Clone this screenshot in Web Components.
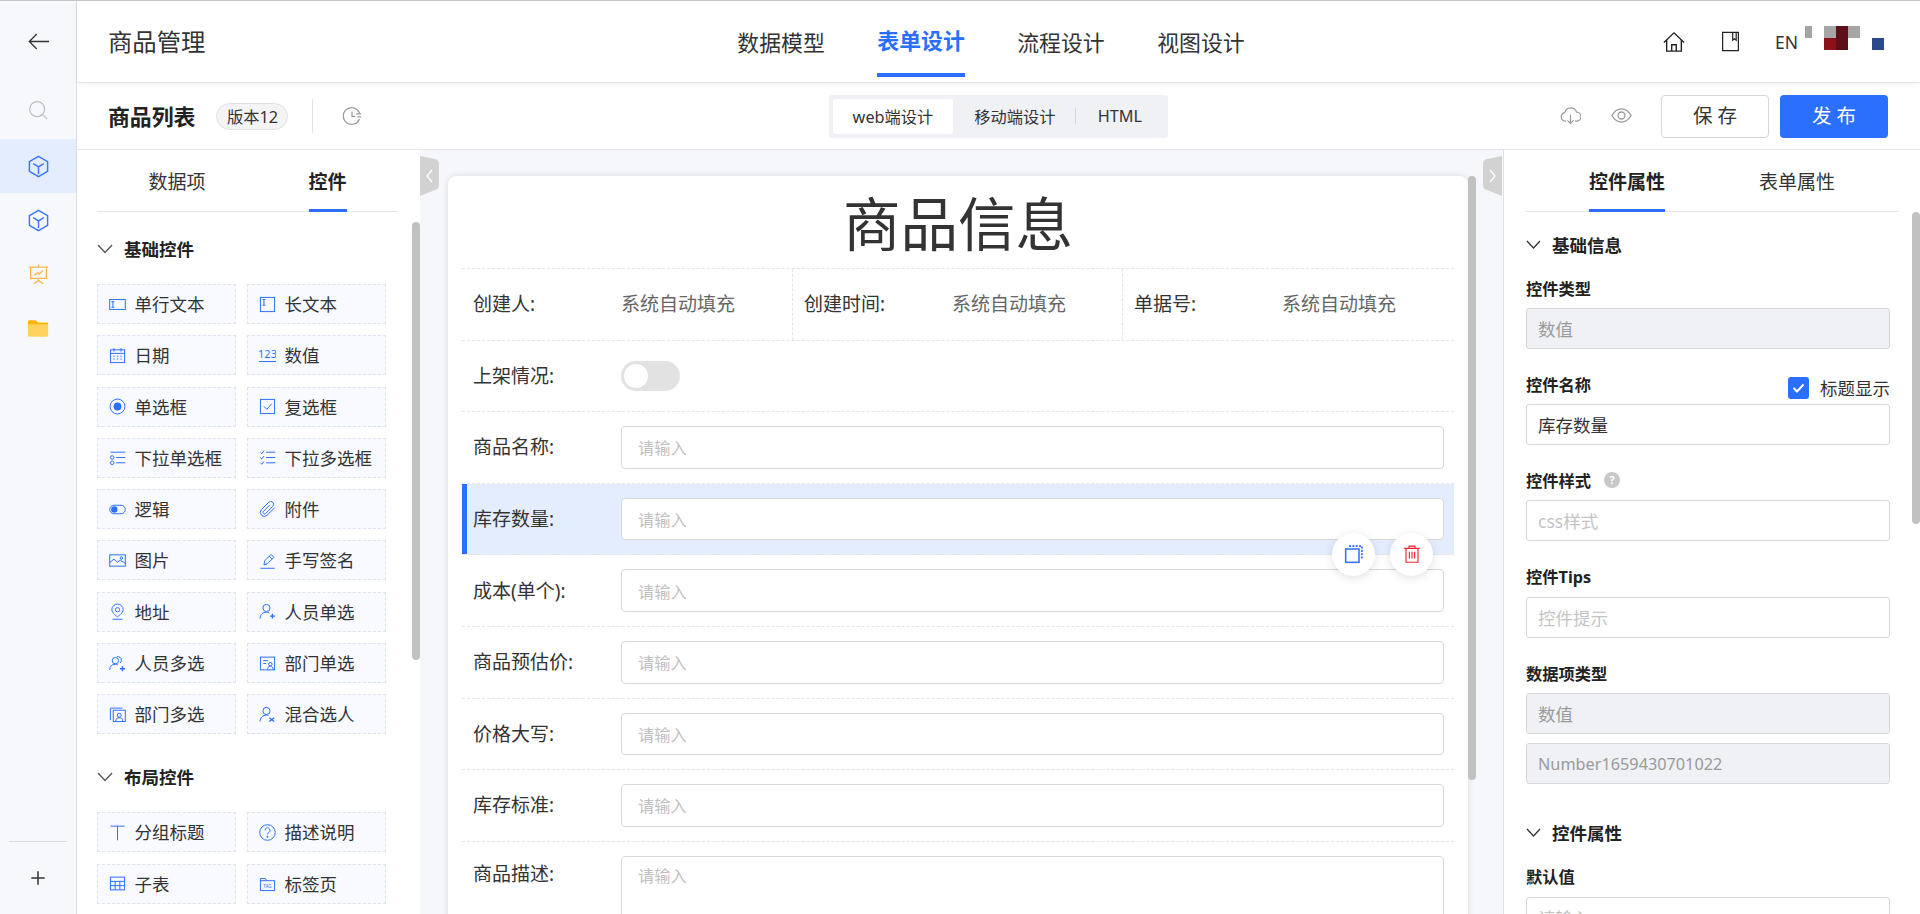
<!DOCTYPE html>
<html lang="zh-CN">

<head>
	<meta charset="UTF-8">
	<title>商品管理</title>
	<style>
		html, body { margin: 0; height: 914px; overflow: hidden; background: #fff; }
		body { font-family: "Noto Sans", "Noto Sans CJK SC", sans-serif; color: #333; }
	</style>
</head>

<body>
	<app-shell>
		<side-rail slot="rail"></side-rail>
		<top-bar slot="top" title="商品管理"></top-bar>
		<tool-bar slot="tool" title="商品列表" version="版本12"></tool-bar>

		<widget-panel slot="left">
			<widget-group title="基础控件">
				<widget-item icon="text" label="单行文本"></widget-item>
				<widget-item icon="longtext" label="长文本"></widget-item>
				<widget-item icon="date" label="日期"></widget-item>
				<widget-item icon="number" label="数值"></widget-item>
				<widget-item icon="radio" label="单选框"></widget-item>
				<widget-item icon="check" label="复选框"></widget-item>
				<widget-item icon="selone" label="下拉单选框"></widget-item>
				<widget-item icon="selmany" label="下拉多选框"></widget-item>
				<widget-item icon="toggle" label="逻辑"></widget-item>
				<widget-item icon="clip" label="附件"></widget-item>
				<widget-item icon="image" label="图片"></widget-item>
				<widget-item icon="pen" label="手写签名"></widget-item>
				<widget-item icon="pin" label="地址"></widget-item>
				<widget-item icon="userplus" label="人员单选"></widget-item>
				<widget-item icon="usersplus" label="人员多选"></widget-item>
				<widget-item icon="deptone" label="部门单选"></widget-item>
				<widget-item icon="deptmany" label="部门多选"></widget-item>
				<widget-item icon="usermix" label="混合选人"></widget-item>
			</widget-group>
			<widget-group title="布局控件">
				<widget-item icon="title" label="分组标题"></widget-item>
				<widget-item icon="help" label="描述说明"></widget-item>
				<widget-item icon="table" label="子表"></widget-item>
				<widget-item icon="tabs" label="标签页"></widget-item>
			</widget-group>
		</widget-panel>

		<form-stage slot="center">
			<form-card title="商品信息">
				<meta-row>
					<meta-cell label="创建人" value="系统自动填充"></meta-cell>
					<meta-cell label="创建时间" value="系统自动填充"></meta-cell>
					<meta-cell label="单据号" value="系统自动填充"></meta-cell>
				</meta-row>
				<form-row label="上架情况"><switch-box></switch-box></form-row>
				<form-row label="商品名称"><text-box></text-box></form-row>
				<form-row label="库存数量" selected><text-box></text-box></form-row>
				<form-row label="成本(单个)"><text-box></text-box></form-row>
				<form-row label="商品预估价"><text-box></text-box></form-row>
				<form-row label="价格大写"><text-box></text-box></form-row>
				<form-row label="库存标准"><text-box></text-box></form-row>
				<form-row label="商品描述" tall><text-box tall></text-box></form-row>
			</form-card>
		</form-stage>

		<prop-panel slot="right">
			<prop-section title="基础信息">
				<prop-field label="控件类型"><prop-input disabled value="数值"></prop-input></prop-field>
				<prop-field label="控件名称">
					<title-check slot="aside" label="标题显示"></title-check>
					<prop-input value="库存数量"></prop-input>
				</prop-field>
				<prop-field label="控件样式" hint><prop-input placeholder="css样式"></prop-input></prop-field>
				<prop-field label="控件Tips"><prop-input placeholder="控件提示"></prop-input></prop-field>
				<prop-field label="数据项类型">
					<prop-input disabled value="数值"></prop-input>
					<prop-input disabled latin value="Number1659430701022"></prop-input>
				</prop-field>
			</prop-section>
			<prop-section title="控件属性">
				<prop-field label="默认值"><prop-input placeholder="请输入"></prop-input></prop-field>
			</prop-section>
		</prop-panel>
	</app-shell>

	<script>
		const BLUE = '#2b6fff';

		// 아이콘 모음 : 전부 24 x 24 기준
		const ICONS = {
			back: '<path d="M24 12H1.500M10 3.500 1.500 12 10 20.500"/>',
			search: '<circle cx="11" cy="11" r="9"/><path d="M17.500 17.500 23 23"/>',
			cube: '<path d="M12 1.500 21.500 7v10L12 22.500 2.500 17V7z"/><path d="M12 12.500V20M12 12.500 6.500 9M12 12.500 17.500 9"/>',
			board: '<path d="M1 3.500h22M3 3.500v13h18v-13M12 .500v3M12 16.500v2.500M6.500 22.500l5.500-3.500 5.500 3.500M7 13l4-3 2 1.500 4-4"/>',
			folder: '<path fill="#ffb300" stroke="none" d="M1 5.500q0-2 2-2h6.500l2.500 2.500h10q1 0 1 1V10H1z"/><path fill="#ffd25f" stroke="none" d="M1 8h22v12q0 1.500-1.500 1.500h-19Q1 21.500 1 20z"/>',
			plus: '<path d="M12 4v16M4 12h16"/>',
			home: '<path d="M1 12.500 12 2l11 10.500M4 10v12h16V10M9.500 22v-7h5v7"/>',
			book: '<path d="M3 1.500h18v21H3zM14.500 1.500v9l2-1.500 2 1.500v-9"/>',
			history: '<path d="M21 8.500A10 10 0 1 0 21 15.500M12 7v5.500h4M17 9.500h6M18.500 13h4.500"/>',
			cloud: '<path d="M7 18.500H6A5 5 0 0 1 5.500 8.600 7 7 0 0 1 19 8.100 5.200 5.200 0 0 1 18.500 18.500H17M12 11v10M8.500 17.500 12 21l3.500-3.500"/>',
			eye: '<path d="M1 12c3-5 6.500-7.500 11-7.500S20 7 23 12c-3 5-6.500 7.500-11 7.500S4 17 1 12z"/><circle cx="12" cy="12" r="4"/>',
			text: '<rect x="1" y="5" width="22" height="14"/><path d="M5.500 8v8M3.500 8h4M3.500 16h4"/>',
			longtext: '<rect x="2" y="2" width="20" height="20"/><path d="M7 5v8M5 5h4M5 13h4"/>',
			date: '<rect x="2" y="4" width="20" height="18"/><path d="M2 9h20M7 1.500v5M17 1.500v5M6 13h2M11 13h2M16 13h2M6 17h2M11 17h2M16 17h2"/>',
			number: '<text x="12" y="16" font-size="15.500" text-anchor="middle" fill="currentColor" stroke="none" font-family="Noto Sans">123</text><path d="M0 20.500h24"/>',
			radio: '<circle cx="12" cy="12" r="10.500"/><circle cx="12" cy="12" r="5.500" fill="currentColor" stroke="none"/>',
			check: '<rect x="2" y="2" width="20" height="20"/><path d="M7 12l4 4 7-8"/>',
			selone: '<path d="M2 4.500h21M10 12h13M10 19.500h13"/><circle cx="4.500" cy="12" r="2.500"/><circle cx="4.500" cy="19.500" r="2.500"/>',
			selmany: '<path d="M2 4.500l2 2 3-4M10 4.500h13M10 12h13M10 19.500h13M2 12l2 2 3-4M2 19.500l2 2 3-4"/>',
			toggle: '<rect x="1" y="6" width="22" height="12" rx="6"/><circle cx="7.500" cy="12" r="4.500" fill="currentColor" stroke="none"/>',
			clip: '<path d="M22 9.500 11.500 20a5.500 5.500 0 0 1-8-8L13.500 2a4 4 0 0 1 6 5.500L9.500 17.500a2 2 0 0 1-3-3L15.500 5.500"/>',
			image: '<rect x="1" y="4" width="22" height="16"/><path d="M1 15l6-5 5 4.500 4-3 7 4.500"/><circle cx="17.500" cy="8.500" r="1.800"/>',
			pen: '<path d="M2 23h20M7 18l1-5.500L17 3.500 21 7.500l-9 9zM14.500 6l4 4"/>',
			pin: '<path d="M12 1.500a8 8 0 0 1 8 8c0 5-8 10-8 10s-8-5-8-10a8 8 0 0 1 8-8z"/><circle cx="12" cy="9.500" r="3"/><path d="M5 23h14"/>',
			userplus: '<circle cx="10.500" cy="7" r="5"/><path d="M1.500 22c0-6 4-9 9-9 2 0 3 .4 4 1"/><path d="M19 15v7M15.500 18.500h7" stroke-width="2"/>',
			usersplus: '<circle cx="9" cy="8" r="4.500"/><path d="M1 21c0-5 3-8 8-8 1.500 0 2.500.3 3.500 1M11 2.500a5 5 0 0 1 6.500 5c0 1.500-.7 3-2 4"/><path d="M19 16v7M15.500 19.500h7" stroke-width="2"/>',
			deptone: '<rect x="2" y="3" width="20" height="18"/><path d="M6 8h7M6 12h4M12 21c0-3.500 2-5 4-5s4 1.500 4 5"/><circle cx="16" cy="13" r="2.500"/>',
			deptmany: '<rect x="6" y="6" width="17" height="16"/><path d="M2 20V3h17M9.500 22c0-4 2-5.500 5-5.500s5 1.500 5 5.500"/><circle cx="14.500" cy="13" r="2.800"/>',
			usermix: '<circle cx="10.500" cy="7" r="5"/><path d="M1.500 22c0-6 4-9 9-9 1 0 2 .1 3 .5"/><path d="M14.500 16.500l7 5.500M14.500 22l7-5.500" stroke-width="1.800"/>',
			title: '<path d="M2 3h20M12 3v20"/>',
			help: '<circle cx="12" cy="12" r="11"/><path d="M8.500 9a3.500 3.500 0 1 1 5.300 3c-1.200.7-1.800 1.200-1.800 2.800"/><circle cx="12" cy="18" r=".8" fill="currentColor"/>',
			table: '<rect x="2" y="3" width="20" height="18"/><path d="M2 9h20M2 15h20M8.700 9v12M15.300 9v12"/>',
			tabs: '<path d="M2 5h7l2 3h11v14H2zM2 8h9"/><text x="12" y="18" font-size="6.500" text-anchor="middle" fill="currentColor" stroke="none" font-family="Noto Sans">TAG</text>',
			copy: '<rect x="2" y="6" width="16" height="16" stroke-width="1.800"/><path d="M6 2.500h15.500V18" stroke-dasharray="2.500 1.500" stroke-width="2"/>',
			trash: '<path d="M1.500 4.500h21M8 4.500V1.500h8v3M4 4.500V23h16V4.500M8.500 9v9M12 9v9M15.500 9v9"/>'
		};

		class UiIcon extends HTMLElement {
			connectedCallback() {
				const size = this.getAttribute('size') || 17;
				const sw = this.getAttribute('sw') || 1.4;
				const color = this.getAttribute('color') || BLUE;
				this.attachShadow({ mode: 'open' }).innerHTML = `
					<style>:host { display: inline-flex; flex: none; color: ${color}; } svg { display: block; }</style>
					<svg width="${size}" height="${size}" viewBox="0 0 24 24" fill="none" stroke="currentColor" stroke-width="${sw}">${ICONS[this.getAttribute('name')] || ''}</svg>`;
			}
		}

		class AppShell extends HTMLElement {
			connectedCallback() {
				this.attachShadow({ mode: 'open' }).innerHTML = `
					<style>
						:host { display: grid; grid-template-columns: 77px 1fr; height: 913px; border-top: 1px solid #c4c4c4; overflow: hidden; }
						.main { display: flex; flex-direction: column; min-width: 0; height: 913px; }
						.work { display: flex; flex: 1; min-height: 0; }
					</style>
					<slot name="rail"></slot>
					<div class="main">
						<slot name="top"></slot>
						<slot name="tool"></slot>
						<div class="work">
							<slot name="left"></slot>
							<slot name="center"></slot>
							<slot name="right"></slot>
						</div>
					</div>`;
			}
		}

		class SideRail extends HTMLElement {
			connectedCallback() {
				this.attachShadow({ mode: 'open' }).innerHTML = `
					<style>
						:host { display: flex; flex-direction: column; background: #f6f8fb; border-right: 1px solid #dcdee2; }
						.cell { display: flex; align-items: center; justify-content: center; height: 54px; }
						.back { height: 80px; }
						.find { height: 58px; }
						.on { background: #e3edfd; }
						.foot { margin: auto 9px 0; height: 72px; border-top: 1px solid #d8dade; }
					</style>
					<div class="cell back"><ui-icon name="back" size="21" color="#333" sw="1.500"></ui-icon></div>
					<div class="cell find"><ui-icon name="search" size="20" color="#bdbdbd" sw="1.500"></ui-icon></div>
					<div class="cell on"><ui-icon name="cube" size="23" color="#3a74ff" sw="1.500"></ui-icon></div>
					<div class="cell"><ui-icon name="cube" size="23" color="#3a74ff" sw="1.500"></ui-icon></div>
					<div class="cell"><ui-icon name="board" size="21" color="#ffb74a" sw="1.500"></ui-icon></div>
					<div class="cell"><ui-icon name="folder" size="22" sw="0"></ui-icon></div>
					<div class="cell foot"><ui-icon name="plus" size="20" color="#333" sw="1.800"></ui-icon></div>`;
			}
		}

		class TopBar extends HTMLElement {
			connectedCallback() {
				this.attachShadow({ mode: 'open' }).innerHTML = `
					<style>
						:host { display: grid; grid-template-columns: 1fr auto 1fr; align-items: center; height: 82px; padding: 0 35px 0 31px; border-bottom: 1px solid #e6e6e6; box-shadow: 0 1px 5px rgba(0, 0, 0, .06); position: relative; z-index: 2; background: #fff; box-sizing: border-box; }
						.name { font-size: 24.375px; color: #333; margin-top: -2px; }
						nav { display: flex; gap: 52.500px; margin-right: 11px; height: 81px; }
						nav a { font-size: 21.875px; display: flex; align-items: center; color: #333; height: 76px; box-sizing: border-box; padding-top: 4px; }
						nav a.on { color: ${BLUE}; font-weight: 700; border-bottom: 4px solid ${BLUE}; }
						.right { display: flex; align-items: center; justify-content: flex-end; }
						.en { font-size: 17.500px; margin: 0 7px 0 34px; color: #333; }
						ui-icon + ui-icon { margin-left: 35px; }
						svg.mosaic { display: block; margin-bottom: 7px; }
					</style>
					<div class="name">${this.getAttribute('title')}</div>
					<nav><a>数据模型</a><a class="on">表单设计</a><a>流程设计</a><a>视图设计</a></nav>
					<div class="right">
						<ui-icon name="home" size="22" color="#222" sw="1.500"></ui-icon>
						<ui-icon name="book" size="21" color="#222" sw="1.400"></ui-icon>
						<span class="en">EN</span>
						<svg class="mosaic" width="80" height="24" viewBox="0 0 80 24">
							<rect width="7" height="12" fill="#a4a4a4"/><rect x="19" width="12" height="12" fill="#a6a6a6"/>
							<rect x="31" width="12" height="12" fill="#5e1018"/><rect x="43" width="12" height="12" fill="#a6a6a6"/>
							<rect x="19" y="12" width="12" height="12" fill="#8c1118"/><rect x="31" y="12" width="12" height="12" fill="#5e1018"/>
							<rect x="67" y="12" width="12" height="12" fill="#2b4a8e"/>
						</svg>
					</div>`;
			}
		}

		class ToolBar extends HTMLElement {
			connectedCallback() {
				this.attachShadow({ mode: 'open' }).innerHTML = `
					<style>
						:host { display: grid; grid-template-columns: 1fr auto 1fr; align-items: center; height: 67px; padding: 0 32px 0 31px; border-bottom: 1px solid #e6e6e6; box-sizing: border-box; }
						.left, .right { display: flex; align-items: center; }
						.right { justify-content: flex-end; }
						b { font-size: 21.875px; color: #222; padding-bottom: 2px; }
						.ver { margin-left: 21px; height: 27px; width: 72px; box-sizing: border-box; display: flex; align-items: center; justify-content: center; border: 1px solid #e0e0e0; border-radius: 14px; background: #f4f4f4; font-size: 16.250px; color: #333; }
						.line { width: 1px; height: 34px; background: #e2e2e2; margin: 0 29px 0 24px; }
						.seg { display: flex; align-items: center; height: 43px; width: 339px; box-sizing: border-box; padding: 4px; background: #eff1f5; border-radius: 3px; font-size: 16.250px; color: #333; }
						.seg span { display: flex; align-items: center; justify-content: center; height: 35px; }
						.seg .on { width: 122px; background: #fff; border-radius: 3px; }
						.seg .mid { width: 122px; margin-left: 1px; }
						.seg i { width: 1px; height: 16px; background: #d5d7db; }
						.seg .html { width: 88px; }
						button { width: 108px; height: 43px; border-radius: 4px; font: inherit; font-size: 19.500px; cursor: pointer; padding: 0 0 3px; }
						.save { margin-left: 29px; background: #fff; border: 1px solid #d6d6d6; color: #333; }
						.pub { margin-left: 11px; background: ${BLUE}; border: 0; color: #fff; }
						.eye { margin-left: 30px; }
						.right ui-icon { margin-bottom: 2px; }
					</style>
					<div class="left">
						<b>${this.getAttribute('title')}</b>
						<span class="ver">${this.getAttribute('version')}</span>
						<span class="line"></span>
						<ui-icon name="history" size="20" color="#9a9a9a" sw="1.500"></ui-icon>
					</div>
					<div class="seg"><span class="on">web端设计</span><span class="mid">移动端设计</span><i></i><span class="html">HTML</span></div>
					<div class="right">
						<ui-icon name="cloud" size="21" color="#9a9a9a" sw="1.400"></ui-icon>
						<ui-icon class="eye" name="eye" size="21" color="#9a9a9a" sw="1.500"></ui-icon>
						<button class="save">保 存</button>
						<button class="pub">发 布</button>
					</div>`;
			}
		}

		class TabBar extends HTMLElement {
			connectedCallback() {
				const active = +this.getAttribute('active');
				const tabs = this.getAttribute('items').split(',')
					.map((t, i) => `<a class="${i === active ? 'on' : ''}">${t}</a>`).join('');
				this.attachShadow({ mode: 'open' }).innerHTML = `
					<style>
						:host { display: flex; justify-content: center; gap: ${this.getAttribute('gap')}px; height: 62px; border-bottom: 1px solid #e4e6ea; box-sizing: border-box; }
						a { display: flex; align-items: center; height: 62px; box-sizing: border-box; font-size: 19px; color: #333; flex: none; }
						a.on { font-weight: 700; color: #222; box-shadow: inset 0 -3px ${BLUE}; }
					</style>${tabs}`;
			}
		}

		class ScrollThumb extends HTMLElement {
			connectedCallback() {
				this.attachShadow({ mode: 'open' }).innerHTML = `
					<style>:host { display: block; position: absolute; right: 0; width: 8px; background: #c1c1c1; border-radius: 4px; top: ${this.getAttribute('top')}px; height: ${this.getAttribute('h')}px; z-index: 2; }</style>`;
			}
		}

		class WidgetPanel extends HTMLElement {
			connectedCallback() {
				this.attachShadow({ mode: 'open' }).innerHTML = `
					<style>
						:host { display: block; width: 343px; height: 100%; box-sizing: border-box; padding: 0 22px 0 20px; position: relative; overflow: hidden; background: #fff; flex: none; }
					</style>
					<tab-bar items="数据项,控件" active="1" gap="103"></tab-bar>
					<slot></slot>
					<scroll-thumb top="72" h="438"></scroll-thumb>`;
			}
		}

		class WidgetGroup extends HTMLElement {
			connectedCallback() {
				this.attachShadow({ mode: 'open' }).innerHTML = `
					<style>
						:host { display: block; padding-top: 26px; }
						:host(:not(:first-child)) { padding-top: 32px; }
						h4 { display: flex; align-items: center; gap: 11px; height: 24px; box-sizing: border-box; padding-bottom: 3px; margin: 0 0 22px; font-size: 17.500px; color: #222; }
						.grid { display: grid; grid-template-columns: 139px 139px; column-gap: 11px; row-gap: 11.300px; }
						svg { flex: none; }
					</style>
					<h4><svg width="16" height="10" viewBox="0 0 16 10" fill="none" stroke="#555" stroke-width="1.300"><path d="M1 1l7 7.500L15 1"/></svg>${this.getAttribute('title')}</h4>
					<div class="grid"><slot></slot></div>`;
			}
		}

		class WidgetItem extends HTMLElement {
			connectedCallback() {
				this.attachShadow({ mode: 'open' }).innerHTML = `
					<style>
						:host { display: flex; align-items: center; gap: 8.500px; height: 40px; box-sizing: border-box; padding-left: 11px; border: 1px dashed #dde3ee; background: #f9faff; font-size: 17.500px; color: #333; white-space: nowrap; }
						span { padding-bottom: 1px; }
					</style>
					<ui-icon name="${this.getAttribute('icon')}"></ui-icon><span>${this.getAttribute('label')}</span>`;
			}
		}

		class CollapseHandle extends HTMLElement {
			connectedCallback() {
				const right = this.getAttribute('side') === 'right';
				this.attachShadow({ mode: 'open' }).innerHTML = `
					<style>:host { display: block; position: absolute; top: 6px; ${right ? 'right: 1px; transform: scaleX(-1);' : 'left: 0;'} width: 19px; height: 40px; z-index: 3; } svg { display: block; }</style>
					<svg width="19" height="40" viewBox="0 0 19 40"><path d="M0 0L15 3q4 1 4 5V29q0 4-4 5L0 40z" fill="#d2d2d2"/><path d="M12 14 7 20 12 26" fill="none" stroke="#fff" stroke-width="1.300"/></svg>`;
			}
		}

		class FormStage extends HTMLElement {
			connectedCallback() {
				this.attachShadow({ mode: 'open' }).innerHTML = `
					<style>
						:host { display: block; width: 1084px; height: 100%; box-sizing: border-box; padding: 26px 35px 0 28px; background: #f5f7fa; border-right: 1px solid #dfe1e5; position: relative; overflow: hidden; flex: none; }
						scroll-thumb { right: 27px; }
					</style>
					<collapse-handle side="left"></collapse-handle>
					<collapse-handle side="right"></collapse-handle>
					<slot></slot>
					<scroll-thumb top="26" h="604"></scroll-thumb>`;
			}
		}

		class FormCard extends HTMLElement {
			connectedCallback() {
				this.attachShadow({ mode: 'open' }).innerHTML = `
					<style>
						:host { display: block; height: 900px; box-sizing: border-box; padding: 0 14px; background: #fff; border-radius: 8px; box-shadow: 0 0 6px rgba(0, 0, 0, .12); }
						h1 { margin: 0; height: 93px; font-size: 57.500px; line-height: 96px; font-weight: 400; text-align: center; color: #333; border-bottom: 1px dashed #e6e6e6; box-sizing: border-box; }
					</style>
					<h1>${this.getAttribute('title')}</h1>
					<slot></slot>`;
			}
		}

		class MetaRow extends HTMLElement {
			connectedCallback() {
				this.attachShadow({ mode: 'open' }).innerHTML = `
					<style>:host { display: grid; grid-template-columns: 331px 330px 1fr; height: 71.600px; box-sizing: border-box; border-bottom: 1px dashed #e6e6e6; }</style>
					<slot></slot>`;
			}
		}

		class MetaCell extends HTMLElement {
			connectedCallback() {
				this.attachShadow({ mode: 'open' }).innerHTML = `
					<style>
						:host { display: flex; align-items: center; padding-left: 11px; font-size: 19px; color: #333; border-right: 1px dashed #e6e6e6; }
						:host(:last-child) { border-right: 0; }
						span { padding-bottom: 2px; }
						.k { width: 148px; flex: none; }
						.v { color: #666; }
					</style>
					<span class="k">${this.getAttribute('label')}:</span><span class="v">${this.getAttribute('value')}</span>`;
			}
		}

		class FormRow extends HTMLElement {
			connectedCallback() {
				const selected = this.hasAttribute('selected');
				const actions = selected ? `
					<span class="round copy"><ui-icon name="copy" size="20" color="${BLUE}"></ui-icon></span>
					<span class="round trash"><ui-icon name="trash" size="18" color="#f5222d" sw="1.500"></ui-icon></span>` : '';
				this.attachShadow({ mode: 'open' }).innerHTML = `
					<style>
						:host { display: flex; align-items: center; position: relative; height: 71.600px; box-sizing: border-box; padding: 0 10px 0 11px; border-bottom: 1px dashed #e6e6e6; font-size: 19px; color: #333; }
						:host([selected]) { background: #e3edfd; box-shadow: inset 5px 0 ${BLUE}; }
						:host([tall]) { height: 200px; align-items: flex-start; padding-top: 14px; border-bottom: 0; }
						.k { width: 148px; flex: none; padding-bottom: 2px; }
						:host([tall]) .k { padding-top: 3px; }
						.c { flex: 1; min-width: 0; }
						.round { position: absolute; top: 49px; width: 43px; height: 43px; border-radius: 50%; background: #fff; box-shadow: 0 2px 10px rgba(0, 0, 0, .12); display: flex; align-items: center; justify-content: center; z-index: 2; }
						.copy { right: 79px; }
						.trash { right: 21px; }
					</style>
					<span class="k">${this.getAttribute('label')}:</span>
					<div class="c"><slot></slot></div>${actions}`;
			}
		}

		class TextBox extends HTMLElement {
			connectedCallback() {
				this.attachShadow({ mode: 'open' }).innerHTML = `
					<style>
						:host { display: flex; align-items: center; height: 42.500px; box-sizing: border-box; padding-left: 16px; border: 1px solid #d8d8d8; border-radius: 4px; background: #fff; font-size: 16.250px; color: #bfbfbf; }
						:host([tall]) { height: 160px; align-items: flex-start; padding-top: 6px; }
					</style>请输入`;
			}
		}

		class SwitchBox extends HTMLElement {
			connectedCallback() {
				this.attachShadow({ mode: 'open' }).innerHTML = `
					<style>
						:host { display: block; width: 59px; height: 30px; padding: 3px; box-sizing: border-box; border-radius: 15px; background: #e2e2e2; }
						i { display: block; width: 24px; height: 24px; border-radius: 50%; background: #fff; }
					</style><i></i>`;
			}
		}

		class PropPanel extends HTMLElement {
			connectedCallback() {
				this.attachShadow({ mode: 'open' }).innerHTML = `
					<style>
						:host { display: block; flex: 1; height: 100%; box-sizing: border-box; padding: 0 30px 0 22px; position: relative; overflow: hidden; background: #fff; }
						tab-bar { margin-right: -8px; }
					</style>
					<tab-bar items="控件属性,表单属性" active="0" gap="94"></tab-bar>
					<slot></slot>
					<scroll-thumb top="62" h="312"></scroll-thumb>`;
			}
		}

		class PropSection extends HTMLElement {
			connectedCallback() {
				this.attachShadow({ mode: 'open' }).innerHTML = `
					<style>
						:host { display: block; padding-top: 21px; }
						:host(:not(:first-of-type)) { padding-top: 14px; }
						h4 { display: flex; align-items: center; gap: 11px; height: 24px; box-sizing: border-box; padding-bottom: 2px; margin: 0 0 19.500px; font-size: 17.500px; color: #222; }
						svg { flex: none; }
					</style>
					<h4><svg width="15" height="9" viewBox="0 0 15 9" fill="none" stroke="#333" stroke-width="1.300"><path d="M1 1l6.500 7L14 1"/></svg>${this.getAttribute('title')}</h4>
					<slot></slot>`;
			}
		}

		class PropField extends HTMLElement {
			connectedCallback() {
				const hint = this.hasAttribute('hint') ? '<i class="hint">?</i>' : '';
				this.attachShadow({ mode: 'open' }).innerHTML = `
					<style>
						:host { display: block; margin-bottom: 24px; }
						.head { display: flex; align-items: center; height: 24px; box-sizing: border-box; padding-bottom: 2px; margin-bottom: 7.250px; font-size: 16.250px; font-weight: 700; color: #222; }
						.hint { width: 16px; height: 16px; margin-left: 13px; border-radius: 50%; background: #c8c8c8; color: #fff; font: 700 11px/16px "Noto Sans", sans-serif; text-align: center; }
						slot[name="aside"] { display: block; margin-left: auto; }
						.box { display: flex; flex-direction: column; gap: 9px; }
					</style>
					<div class="head"><span>${this.getAttribute('label')}</span>${hint}<slot name="aside"></slot></div>
					<div class="box"><slot></slot></div>`;
			}
		}

		class PropInput extends HTMLElement {
			connectedCallback() {
				const value = this.getAttribute('value');
				this.attachShadow({ mode: 'open' }).innerHTML = `
					<style>
						:host { display: flex; align-items: center; height: 41px; box-sizing: border-box; padding-left: 11px; border: 1px solid #d8d8d8; border-radius: 3px; background: #fff; font-size: 17.500px; color: ${value ? '#333' : '#c4c4c4'}; }
						:host([disabled]) { background: #eff1f5; color: #9a9a9a; }
						:host([latin]) { font-size: 16.250px; padding-top: 2px; }
					</style>${value || this.getAttribute('placeholder') || ''}`;
			}
		}

		class TitleCheck extends HTMLElement {
			connectedCallback() {
				this.attachShadow({ mode: 'open' }).innerHTML = `
					<style>
						:host { display: flex; align-items: center; gap: 11px; margin-top: 8px; font-size: 17.500px; font-weight: 400; color: #333; white-space: nowrap; }
						i { display: flex; align-items: center; justify-content: center; width: 21px; height: 22px; border-radius: 3px; background: ${BLUE}; }
					</style>
					<i><svg width="13" height="10" viewBox="0 0 13 10" fill="none" stroke="#fff" stroke-width="2"><path d="M1.500 5l3.500 3.500L11.500 1.500"/></svg></i>${this.getAttribute('label')}`;
			}
		}

		customElements.define('ui-icon', UiIcon);
		customElements.define('app-shell', AppShell);
		customElements.define('side-rail', SideRail);
		customElements.define('top-bar', TopBar);
		customElements.define('tool-bar', ToolBar);
		customElements.define('tab-bar', TabBar);
		customElements.define('scroll-thumb', ScrollThumb);
		customElements.define('widget-panel', WidgetPanel);
		customElements.define('widget-group', WidgetGroup);
		customElements.define('widget-item', WidgetItem);
		customElements.define('collapse-handle', CollapseHandle);
		customElements.define('form-stage', FormStage);
		customElements.define('form-card', FormCard);
		customElements.define('meta-row', MetaRow);
		customElements.define('meta-cell', MetaCell);
		customElements.define('form-row', FormRow);
		customElements.define('text-box', TextBox);
		customElements.define('switch-box', SwitchBox);
		customElements.define('prop-panel', PropPanel);
		customElements.define('prop-section', PropSection);
		customElements.define('prop-field', PropField);
		customElements.define('prop-input', PropInput);
		customElements.define('title-check', TitleCheck);
	</script>
</body>

</html>
